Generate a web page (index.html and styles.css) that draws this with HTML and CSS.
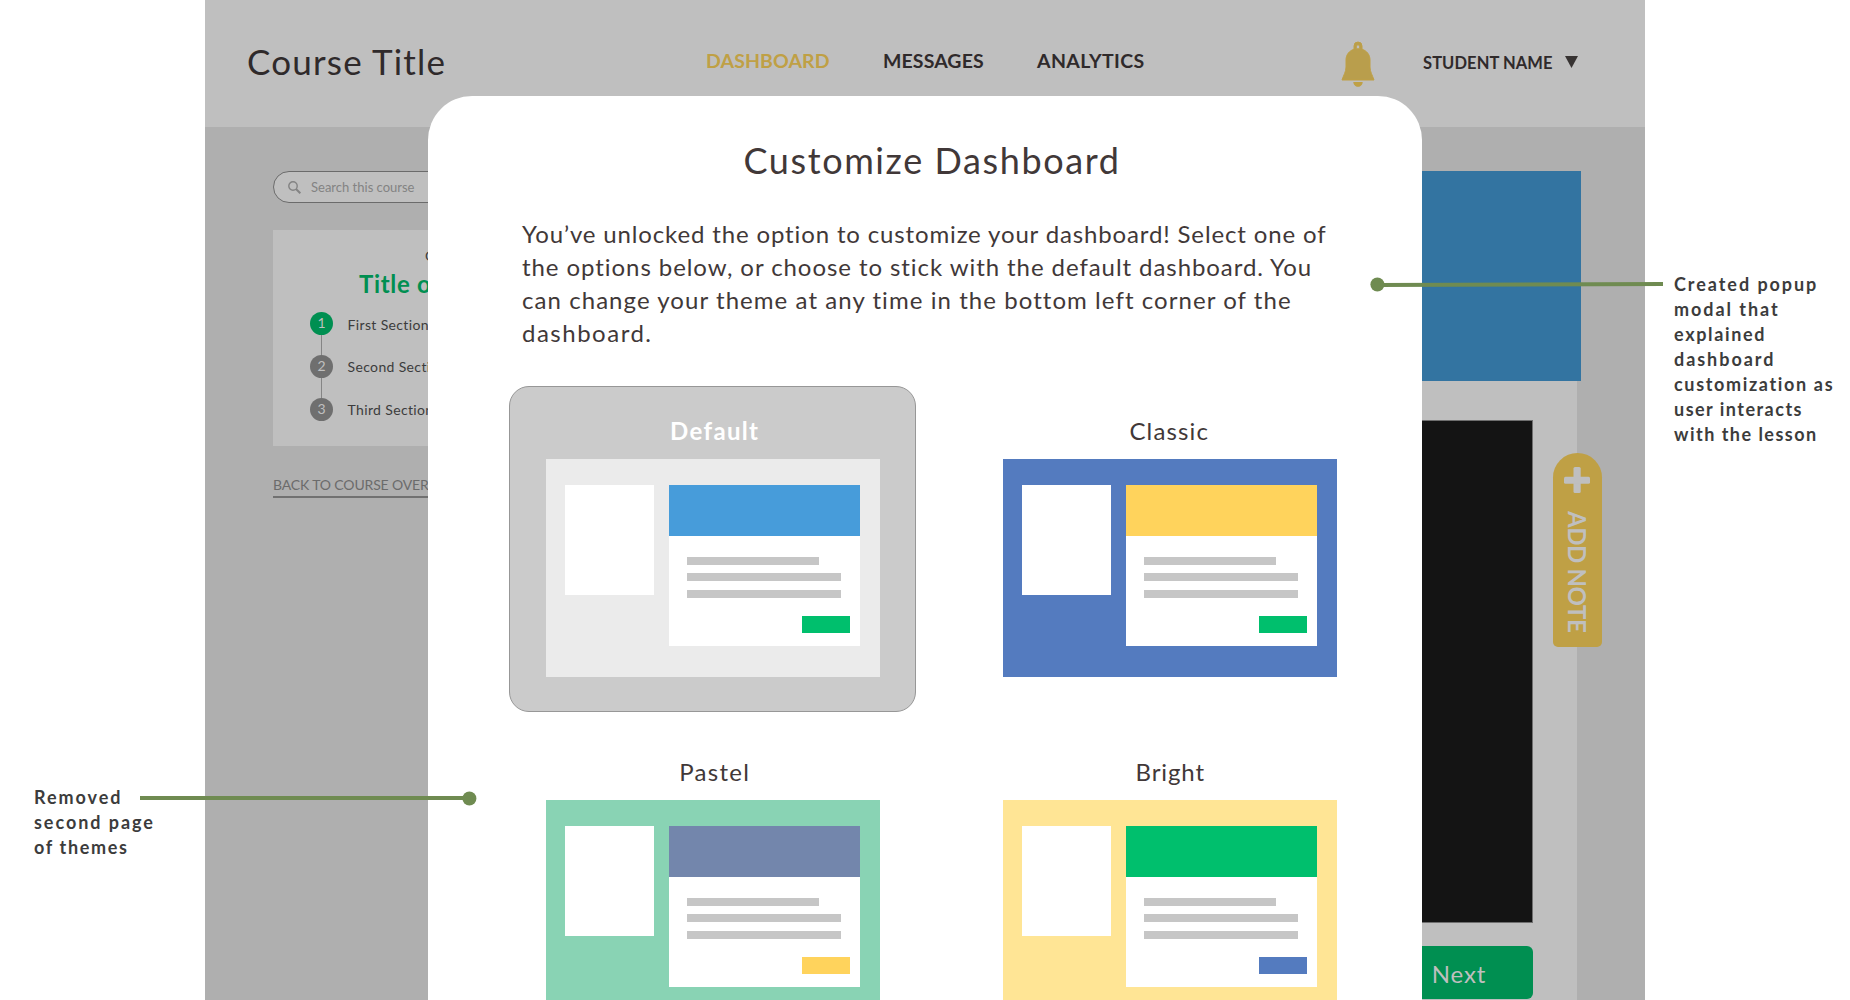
FILE: index.html
```html
<!DOCTYPE html>
<html lang="en">
<head>
<meta charset="utf-8">
<title>Customize Dashboard</title>
<link rel="stylesheet" href="styles.css">
</head>
<body>
<div class="board">
  <aside class="note note-left">
    <span class="note-line wide">Removed</span>
    <span class="note-line wide">second page</span>
    <span class="note-line">of themes</span>
  </aside>

  <div class="screen">
    <header class="topbar">
      <div class="course">Course Title</div>
      <a class="nav active">DASHBOARD</a>
      <a class="nav">MESSAGES</a>
      <a class="nav nav-wide">ANALYTICS</a>
      <svg class="bell" width="34" height="46" viewBox="0 0 34 46">
        <path fill="#b99e4c" stroke="#bfa045" stroke-width="1" fill-rule="evenodd" d="M13 8.2V5a4 4 0 0 1 8 0v3.200C26 9.800 29 14 29 19v7c0 5 2.400 8 4 13H1c1.600-5 4-8 4-13v-7c0-5 3-9.200 8-10.800zM17 3.800a1.600 1.600 0 0 0-1.600 1.600v1a1.600 1.600 0 0 0 3.200 0v-1A1.600 1.600 0 0 0 17 3.800z"/>
        <path fill="#bfa045" d="M12.300 41h9.400c0 2.600-2.200 4.800-4.700 4.800s-4.700-2.200-4.700-4.800z"/>
      </svg>
      <div class="student">STUDENT NAME</div>
      <svg class="caret" width="13" height="12" viewBox="0 0 13 12"><path fill="#373332" d="M0 0h13L6.500 12z"/></svg>
    </header>

    <div class="content">
      <div class="sidebar">
        <div class="search">
          <svg width="13" height="13" viewBox="0 0 13 13" fill="none" stroke="#838383"><circle cx="5" cy="5" r="4.200" stroke-width="1.400"/><path d="M8 8l4.300 4.300" stroke-width="2"/></svg>
          <span>Search this course</span>
        </div>
        <div class="panel">
          <div class="eyebrow">Course</div>
          <div class="panel-title">Title of Course</div>
          <div class="step"><span class="dot current">1</span><span class="step-name first">First Section</span></div>
          <div class="step"><span class="dot">2</span><span class="step-name">Second Section</span></div>
          <div class="step"><span class="dot">3</span><span class="step-name">Third Section</span></div>
        </div>
        <a class="back">BACK TO COURSE OVERVIEW</a>
      </div>
      <div class="lesson">
        <div class="hero"></div>
        <div class="sheet">
          <div class="video"></div>
          <div class="next">Next</div>
        </div>
      </div>
    </div>
  </div>

  <aside class="note note-right">
    <span class="note-line wide">Created popup</span>
    <span class="note-line wide">modal that</span>
    <span class="note-line">explained</span>
    <span class="note-line wide">dashboard</span>
    <span class="note-line">customization as</span>
    <span class="note-line snug">user interacts</span>
    <span class="note-line snug">with the lesson</span>
  </aside>

  <div class="add-note">
    <svg width="26" height="26" viewBox="0 0 26 26" fill="#bfbfbf"><rect x="9.500" width="7.200" height="26" rx="1.500"/><rect y="9.700" width="26" height="7" rx="1.500"/></svg>
    <span>ADD NOTE</span>
  </div>

  <section class="modal">
    <h1>Customize Dashboard</h1>
    <p class="intro">
      <span class="l1">You’ve unlocked the option to customize your dashboard! Select one of</span>
      <span class="l2">the options below, or choose to stick with the default dashboard. You</span>
      <span class="l3">can change your theme at any time in the bottom left corner of the</span>
      <span class="l4">dashboard.</span>
    </p>
    <div class="themes">
      <div class="theme selected">
        <h2>Default</h2>
        <div class="thumb">
          <div class="side"></div>
          <div class="main"><div class="banner"></div><div class="bar short"></div><div class="bar"></div><div class="bar last"></div><div class="btn"></div></div>
        </div>
      </div>
      <div class="theme classic">
        <h2>Classic</h2>
        <div class="thumb">
          <div class="side"></div>
          <div class="main"><div class="banner"></div><div class="bar short"></div><div class="bar"></div><div class="bar last"></div><div class="btn"></div></div>
        </div>
      </div>
      <div class="theme pastel">
        <h2>Pastel</h2>
        <div class="thumb">
          <div class="side"></div>
          <div class="main"><div class="banner"></div><div class="bar short"></div><div class="bar"></div><div class="bar last"></div><div class="btn"></div></div>
        </div>
      </div>
      <div class="theme bright">
        <h2>Bright</h2>
        <div class="thumb">
          <div class="side"></div>
          <div class="main"><div class="banner"></div><div class="bar short"></div><div class="bar"></div><div class="bar last"></div><div class="btn"></div></div>
        </div>
      </div>
    </div>
  </section>

  <svg class="connectors" width="1850" height="1000" viewBox="0 0 1850 1000" fill="#6f8b51">
    <rect x="140" y="796" width="327" height="4"/>
    <circle cx="469.400" cy="798.500" r="7"/>
    <path d="M1378 283L1663 282V286L1378 287z"/>
    <circle cx="1377.400" cy="284.500" r="7"/>
  </svg>
</div>
</body>
</html>
```
FILE: styles.css
```css
* { box-sizing: border-box; }

body {
  margin: 0;
  background: #fff;
  font-family: Lato, "Open Sans", sans-serif;
  overflow: hidden;
}

h1, h2, p { margin: 0; }

.board {
  position: relative;
  display: grid;
  grid-template-columns: 205px 1440px 205px;
  width: 1850px;
  height: 1000px;
  overflow: hidden;
}

/* Margin notes */
.note {
  display: flex;
  flex-direction: column;
  color: #3c3c3c;
  font-size: 18px;
  font-weight: 700;
  line-height: 25px;
  letter-spacing: 1.65px;
  white-space: nowrap;
}
.note .wide { letter-spacing: 1.95px; }
.note .snug { letter-spacing: 1.48px; }
.note-left { padding: 785px 0 0 34px; }
.note-right { padding: 272px 0 0 29px; }

/* Dimmed dashboard */
.screen {
  height: 1000px;
  overflow: hidden;
  background: #afafaf;
}

.topbar {
  display: grid;
  grid-template-columns: 459px 177px 154px 304px 82px 142px auto;
  align-items: center;
  height: 127px;
  padding: 0 0 6px 42px;
  background: #bfbfbf;
  color: #2f2a2b;
  white-space: nowrap;
}
.course { font-size: 35px; line-height: 42px; letter-spacing: 1.2px; }
.nav { font-size: 19.5px; line-height: 24px; font-weight: 700; letter-spacing: 0.1px; }
.nav-wide { letter-spacing: 0.4px; }
.active { color: #bfa045; }
.bell { margin-top: 6px; }
.student { font-size: 16.5px; line-height: 20px; font-weight: 700; padding-top: 4px; letter-spacing: 0.08px; }
.caret { margin-top: 3px; }

.content {
  display: flex;
  gap: 100px;
  padding: 44px 64px 0 68px;
}

.sidebar { width: 330px; flex: none; }
.search {
  display: flex;
  align-items: center;
  gap: 10px;
  height: 32px;
  padding-left: 14px;
  border: 1px solid #6b6b6b;
  border-radius: 16px;
  background: #bfbfbf;
  color: #838383;
  font-size: 13px;
  line-height: 16px;
}

.panel {
  height: 216px;
  margin-top: 27px;
  padding-top: 16px;
  background: #bfbfbf;
  color: #3c3c3c;
}
.eyebrow { padding-left: 152px; font-size: 14px; line-height: 20px; }
.panel-title {
  margin: 3px 0 13px;
  padding-left: 86px;
  color: #008f51;
  font-size: 24px;
  font-weight: 700;
  line-height: 30px;
  letter-spacing: 0.68px;
}
.step {
  position: relative;
  display: flex;
  gap: 14.5px;
  height: 43px;
  padding-left: 37px;
}
.step:not(:last-child)::after {
  content: "";
  position: absolute;
  left: 48px;
  top: 23px;
  width: 1px;
  height: 20px;
  background: #858585;
}
.dot {
  width: 23px;
  height: 23px;
  border-radius: 50%;
  background: #6f6f6f;
  color: #bfbfbf;
  font-size: 14px;
  line-height: 22px;
  text-align: center;
}
.current { background: #008f51; }
.step-name { font-size: 14px; line-height: 23px; letter-spacing: 0.36px; }
.first { padding-top: 1px; }

.back {
  display: block;
  height: 23px;
  margin-top: 29px;
  border-bottom: 2px solid #717171;
  color: #6b6b6b;
  font-size: 14px;
  line-height: 20px;
  letter-spacing: -0.15px;
}

.lesson { flex: 1; }
.hero { height: 210px; background: #3374a1; }
.sheet {
  display: flex;
  flex-direction: column;
  align-items: flex-end;
  gap: 23px;
  height: 620px;
  margin-right: 4px;
  padding: 39px 44px 0;
  background: #bfbfbf;
}
.video {
  width: 100%;
  height: 503px;
  border: 1px solid #6f6f6f;
  background: #141414;
}
.next {
  width: 148px;
  height: 53px;
  border-radius: 6px;
  background: #008f51;
  color: #bfbfbf;
  font-size: 24px;
  line-height: 55px;
  letter-spacing: 0.86px;
  text-align: center;
}

/* Floating tab on the edge of the lesson */
.add-note {
  position: absolute;
  left: 1553px;
  top: 453px;
  display: flex;
  flex-direction: column;
  align-items: center;
  width: 49px;
  height: 194px;
  padding-top: 14px;
  border-radius: 24.5px 24.5px 5px 5px;
  background: #bfa045;
}
.add-note svg { margin-right: 2px; }
.add-note span {
  margin-top: 18px;
  writing-mode: vertical-rl;
  color: #bfbfbf;
  font-size: 24px;
  line-height: 49px;
  font-weight: 700;
  letter-spacing: -0.4px;
  white-space: nowrap;
}

/* Theme picker */
.modal {
  position: absolute;
  left: 428px;
  top: 96px;
  width: 994px;
  height: 1000px;
  padding: 43px 49px 0 81px;
  border-radius: 44px;
  background: #fff;
  color: #413838;
}
.modal h1 {
  padding-left: 234.5px;
  font-size: 36px;
  line-height: 42px;
  font-weight: 400;
  letter-spacing: 1.6px;
}
.intro {
  display: flex;
  flex-direction: column;
  margin-top: 36px;
  padding-left: 13px;
  font-size: 24px;
  line-height: 33px;
  white-space: nowrap;
}
.l1 { letter-spacing: 0.855px; }
.l2 { letter-spacing: 0.93px; }
.l3 { letter-spacing: 1.06px; }
.l4 { letter-spacing: 1.5px; }

.themes {
  display: grid;
  grid-template-columns: 407px 407px;
  grid-auto-rows: 326px;
  gap: 15px 50px;
  margin-top: 37px;
}
.theme {
  padding: 27px 35.5px 0 36px;
  border: 1px solid transparent;
  border-radius: 20px;
}
.theme h2 {
  margin-bottom: 12px;
  padding-left: 4px;
  font-size: 24px;
  line-height: 33px;
  font-weight: 400;
  letter-spacing: 1.15px;
  text-align: center;
}
.thumb {
  display: flex;
  gap: 15px;
  width: 334px;
  height: 218px;
  padding: 26px 20px 0 19px;
  background: var(--page);
}
.side { width: 89px; height: 110px; background: #fff; }
.main {
  display: flex;
  flex-direction: column;
  width: 191px;
  height: 161px;
  background: #fff;
}
.banner { height: 51px; margin-bottom: 21px; background: var(--banner); }
.bar { width: 154px; height: 8px; margin: 0 0 9px 18px; background: #c6c6c6; }
.short { width: 132px; margin-bottom: 8px; }
.last { margin-bottom: 18px; }
.btn { width: 48px; height: 17px; margin-right: 10px; align-self: flex-end; background: var(--btn); }

.selected {
  --page: #ebebeb;
  --banner: #479cda;
  --btn: #00bf6d;
  border-color: #979797;
  background: #cbcbcb;
}
.selected h2 { color: #fff; font-weight: 700; letter-spacing: 1.34px; }
.classic { --page: #547bbf; --banner: #ffd35c; --btn: #00bf6d; }
.classic h2 { padding-left: 0; padding-right: 1px; }
.pastel { --page: #89d3b4; --banner: #7386ac; --btn: #ffd35c; }
.pastel h2 { letter-spacing: 1.29px; }
.bright { --page: #ffe595; --banner: #00bf6d; --btn: #547bbf; }
.bright h2 { padding-left: 1px; letter-spacing: 0.91px; }

.connectors {
  position: absolute;
  left: 0;
  top: 0;
}
```
